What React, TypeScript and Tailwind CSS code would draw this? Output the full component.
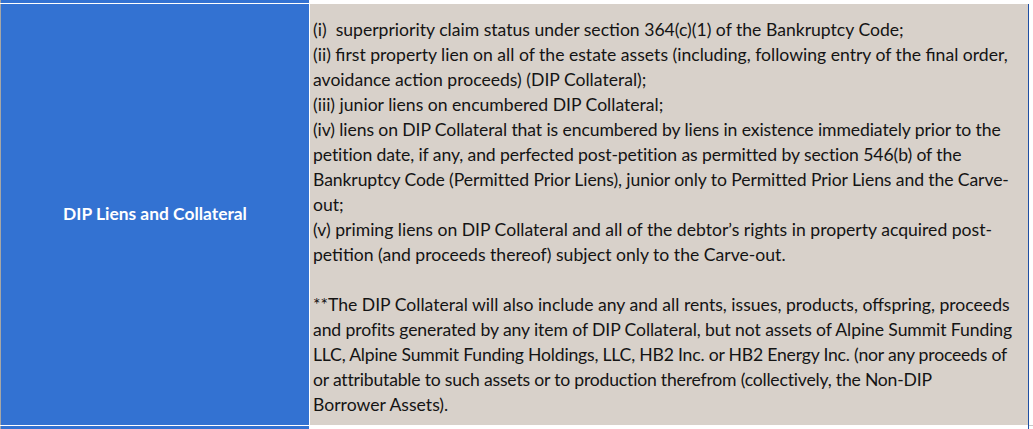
import React from "react";

type Line = { text: string; cls?: string };

const lines: Line[] = [
  { text: "(i)\u00a0 superpriority claim status under section 364(c)(1) of the Bankruptcy Code;" },
  { text: "(ii) first property lien on all of the estate assets (including, following entry of the final order," },
  { text: "avoidance action proceeds) (DIP Collateral);" },
  { text: "(iii) junior liens on encumbered DIP Collateral;" },
  { text: "(iv) liens on DIP Collateral that is encumbered by liens in existence immediately prior to the", cls: "tracking-[-0.1px]" },
  { text: "petition date, if any, and perfected post-petition as permitted by section 546(b) of the", cls: "tracking-[-0.1px]" },
  { text: "Bankruptcy Code (Permitted Prior Liens), junior only to Permitted Prior Liens and the Carve-", cls: "tracking-[-0.1px]" },
  { text: "out;" },
  { text: "(v) priming liens on DIP Collateral and all of the debtor\u2019s rights in property acquired post-" },
  { text: "petition (and proceeds thereof) subject only to the Carve-out." },
  { text: "" },
  { text: "**The DIP Collateral will also include any and all rents, issues, products, offspring, proceeds" },
  { text: "and profits generated by any item of DIP Collateral, but not assets of Alpine Summit Funding", cls: "tracking-[-0.1px]" },
  { text: "LLC, Alpine Summit Funding Holdings, LLC, HB2 Inc. or HB2 Energy Inc. (nor any proceeds of", cls: "tracking-[-0.2px]" },
  { text: "or attributable to such assets or to production therefrom (collectively, the Non-DIP", cls: "tracking-[-0.2px]" },
  { text: "Borrower Assets)." },
];

export default function App() {
  return (
    <div
      className="w-[1033px] h-[429px] bg-white overflow-hidden flex flex-col"
      style={{ fontFamily: "Lato, 'Open Sans', sans-serif" }}
    >
      {/* top strip */}
      <div className="flex h-[3px]">
        <div className="w-px bg-[#a6a6a6]" />
        <div className="w-[308px] bg-[#3372d2]" />
      </div>
      <div className="h-px bg-white" />

      {/* main row */}
      <div className="flex h-[421px]">
        <div className="w-px bg-[#a6a6a6]" />
        <div className="w-[308px] bg-[#3372d2] flex items-center justify-center">
          <span className="text-white font-bold text-[17.4px]">
            DIP Liens and Collateral
          </span>
        </div>
        <div className="w-px bg-white" />
        <div className="w-[718px] bg-[#d8d1ca] pl-[3px] pt-[13px] text-[#141414] text-[17.6px]">
          {lines.map((l, i) => (
            <div
              key={i}
              className={`h-[25px] leading-[25px] whitespace-nowrap ${l.cls ?? ""}`}
            >
              {l.text}
            </div>
          ))}
        </div>
        <div className="w-px bg-[#1f4fa3]" />
      </div>

      <div className="flex h-px">
        <div className="w-[1028px] bg-white" />
        <div className="w-px bg-[#1f4fa3]" />
        <div className="flex-1 bg-[#c8c8c8]" />
      </div>
      <div className="flex flex-1">
        <div className="w-px bg-[#a6a6a6]" />
        <div className="w-[308px] bg-[#3372d2]" />
        <div className="w-[719px]" />
        <div className="w-px bg-[#1f4fa3]" />
      </div>
    </div>
  );
}
